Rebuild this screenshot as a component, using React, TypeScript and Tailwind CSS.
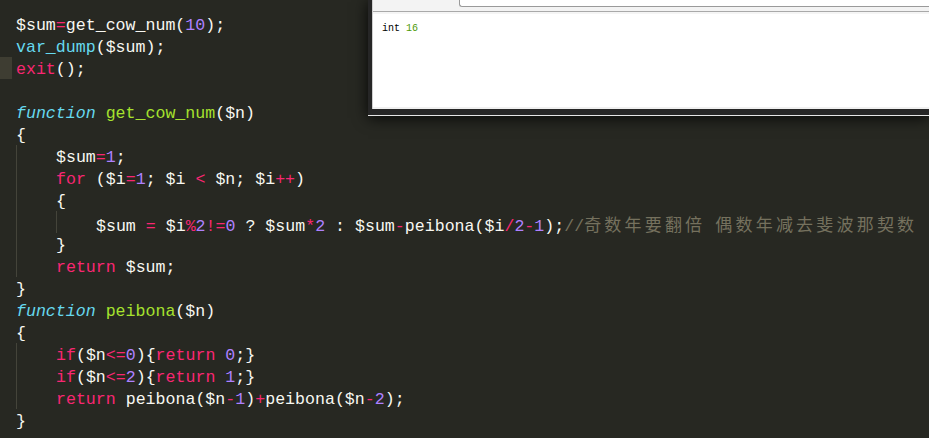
import React from 'react';

type Tok = [string, string];

const W = 'text-[#f8f8f2]';
const K = 'text-[#f92672]';
const N = 'text-[#ae81ff]';
const F = 'text-[#a6e22e]';
const C = 'text-[#66d9ef]';
const CI = 'text-[#66d9ef] italic';

type Line = { indent: number; toks: Tok[]; active?: boolean; comment?: boolean };

const lines: Line[] = [
  { indent: 0, toks: [['$sum', W], ['=', K], ['get_cow_num(', W], ['10', N], [');', W]] },
  { indent: 0, toks: [['var_dump', C], ['($sum);', W]] },
  { indent: 0, toks: [['exit', K], ['();', W]], active: true },
  { indent: 0, toks: [] },
  { indent: 0, toks: [['function', CI], [' ', W], ['get_cow_num', F], ['($n)', W]] },
  { indent: 0, toks: [['{', W]] },
  { indent: 1, toks: [['$sum', W], ['=', K], ['1', N], [';', W]] },
  { indent: 1, toks: [['for', K], [' ($i', W], ['=', K], ['1', N], ['; $i ', W], ['<', K], [' $n; $i', W], ['++', K], [')', W]] },
  { indent: 1, toks: [['{', W]] },
  {
    indent: 2,
    comment: true,
    toks: [
      ['$sum ', W], ['=', K], [' $i', W], ['%', K], ['2', N], ['!=', K], ['0', N], [' ? $sum', W], ['*', K], ['2', N],
      [' : $sum', W], ['-', K], ['peibona($i', W], ['/', K], ['2', N], ['-', K], ['1', N], [');', W],
    ],
  },
  { indent: 1, toks: [['}', W]] },
  { indent: 1, toks: [['return', K], [' $sum;', W]] },
  { indent: 0, toks: [['}', W]] },
  { indent: 0, toks: [['function', CI], [' ', W], ['peibona', F], ['($n)', W]] },
  { indent: 0, toks: [['{', W]] },
  { indent: 1, toks: [['if', K], ['($n', W], ['<=', K], ['0', N], ['){', W], ['return', K], [' ', W], ['0', N], [';}', W]] },
  { indent: 1, toks: [['if', K], ['($n', W], ['<=', K], ['2', N], ['){', W], ['return', K], [' ', W], ['1', N], [';}', W]] },
  {
    indent: 1,
    toks: [['return', K], [' peibona($n', W], ['-', K], ['1', N], [')', W], ['+', K], ['peibona($n', W], ['-', K], ['2', N], [');', W]],
  },
  { indent: 0, toks: [['}', W]] },
];

const CodeLine = ({ line }: { line: Line }) => (
  <div className="flex h-[22px] items-stretch whitespace-pre">
    <span className={`w-[12px] shrink-0 ${line.active ? 'bg-[#3e3d32]' : ''}`} />
    <span className="w-[4px] shrink-0" />
    {Array.from({ length: line.indent }).map((_, i) => (
      <span key={i} className="w-[40px] shrink-0 border-l border-[#44443a]" />
    ))}
    <span className="pt-[2px]">
      {line.toks.map(([t, c], i) => (
        <span key={i} className={c}>
          {t}
        </span>
      ))}
      {line.comment && (
        <span className="text-[#75715e]">
          //
          <span className="font-['Noto_Sans_CJK_SC',sans-serif] text-[17px] tracking-[3.2px]">奇数年要翻倍</span>
          {' '}
          <span className="font-['Noto_Sans_CJK_SC',sans-serif] text-[17px] tracking-[3.2px]">偶数年减去斐波那契数</span>
        </span>
      )}
    </span>
  </div>
);

const BrowserWindow = () => (
  <div className="absolute left-[368px] top-0 right-0 h-[116px] shadow-[0_2px_14px_rgba(0,0,0,0.85)] bg-[#e6e6e6] pb-[1px]">
    <div className="flex h-full flex-col border-l-[4px] border-b-[6px] border-[#262626]">
      <div className="flex h-full flex-col border-l border-[#cfcfcf]">
        <div className="flex h-[12px] shrink-0 bg-[#f3f3f3] border-b border-[#a9a9a9]">
          <div className="w-[86px] shrink-0" />
          <div className="h-[7px] flex-1 rounded-bl-[3px] border-l border-b border-[#9a9a9a] bg-white" />
        </div>
        <div className="h-[2px] shrink-0 bg-[#f5f5f5]" />
        <div className="flex-1 bg-white pl-[9px] pt-[9px] font-['Liberation_Mono',monospace] text-[10px] leading-[12px]">
          <span className="text-black">int </span>
          <span className="text-[#4e9a06]">16</span>
        </div>
        <div className="h-[2px] shrink-0 bg-[#f0f0f0]" />
      </div>
    </div>
  </div>
);

export default function App() {
  return (
    <div className="relative h-[438px] w-[929px] overflow-hidden bg-[#272822]">
      <div className="pt-[13px] font-['Liberation_Mono',monospace] text-[16.6px] leading-[22px]">
        {lines.map((l, i) => (
          <CodeLine key={i} line={l} />
        ))}
      </div>
      <BrowserWindow />
    </div>
  );
}
